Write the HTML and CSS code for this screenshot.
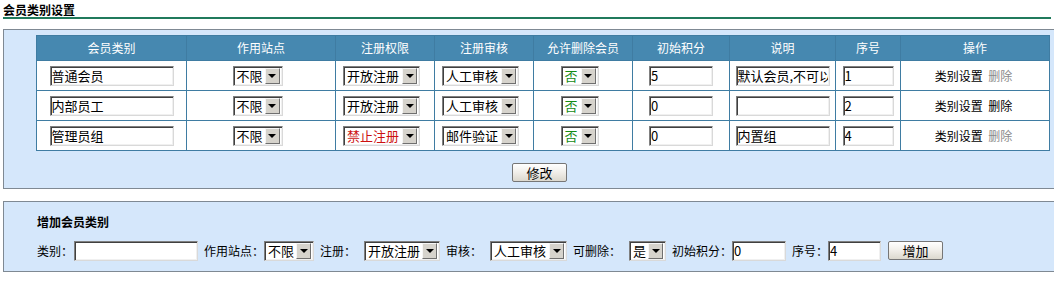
FILE: index.html
```html
<!DOCTYPE html>
<html lang="zh-CN">
<head>
<meta charset="utf-8">
<title>会员类别设置</title>
<link rel="stylesheet" href="styles.css">
</head>
<body>
<div class="page">
  <div class="title">会员类别设置</div>

  <div class="panel panel-list">
    <table class="grid">
      <colgroup>
        <col class="c150"><col class="c149"><col class="c99"><col class="c99"><col class="c99"><col class="c97"><col class="c106"><col class="c65"><col class="c149">
      </colgroup>
      <thead>
        <tr>
          <th>会员类别</th><th>作用站点</th><th>注册权限</th><th>注册审核</th><th>允许删除会员</th><th>初始积分</th><th>说明</th><th>序号</th><th>操作</th>
        </tr>
      </thead>
      <tbody>
        <tr>
          <td><input class="txt w-name" value="普通会员"></td>
          <td><span class="sel w-site"><span class="val">不限</span><span class="arr"></span></span></td>
          <td><span class="sel w-reg"><span class="val">开放注册</span><span class="arr"></span></span></td>
          <td><span class="sel w-aud"><span class="val">人工审核</span><span class="arr"></span></span></td>
          <td><span class="sel w-del"><span class="val green">否</span><span class="arr"></span></span></td>
          <td><input class="txt w-score" value="5"></td>
          <td><input class="txt w-desc" value="默认会员,不可以删除"></td>
          <td><input class="txt w-order" value="1"></td>
          <td class="ops"><span>类别设置</span> <span class="off">删除</span></td>
        </tr>
        <tr>
          <td><input class="txt w-name" value="内部员工"></td>
          <td><span class="sel w-site"><span class="val">不限</span><span class="arr"></span></span></td>
          <td><span class="sel w-reg"><span class="val">开放注册</span><span class="arr"></span></span></td>
          <td><span class="sel w-aud"><span class="val">人工审核</span><span class="arr"></span></span></td>
          <td><span class="sel w-del"><span class="val green">否</span><span class="arr"></span></span></td>
          <td><input class="txt w-score" value="0"></td>
          <td><input class="txt w-desc" value=""></td>
          <td><input class="txt w-order" value="2"></td>
          <td class="ops"><span>类别设置</span> <span>删除</span></td>
        </tr>
        <tr>
          <td><input class="txt w-name" value="管理员组"></td>
          <td><span class="sel w-site"><span class="val">不限</span><span class="arr"></span></span></td>
          <td><span class="sel w-reg"><span class="val red">禁止注册</span><span class="arr"></span></span></td>
          <td><span class="sel w-aud"><span class="val">邮件验证</span><span class="arr"></span></span></td>
          <td><span class="sel w-del"><span class="val green">否</span><span class="arr"></span></span></td>
          <td><input class="txt w-score" value="0"></td>
          <td><input class="txt w-desc" value="内置组"></td>
          <td><input class="txt w-order" value="4"></td>
          <td class="ops"><span>类别设置</span> <span class="off">删除</span></td>
        </tr>
      </tbody>
    </table>
    <div class="actions"><button class="btn">修改</button></div>
  </div>

  <div class="panel panel-add">
    <div class="sub">增加会员类别</div>
    <div class="form-row">
      <span class="lbl first">类别：</span>
      <input class="txt a-name" value="">
      <span class="lbl">作用站点：</span>
      <span class="sel a-site"><span class="val">不限</span><span class="arr"></span></span>
      <span class="lbl">注册：</span>
      <span class="sel a-reg gap"><span class="val">开放注册</span><span class="arr"></span></span>
      <span class="lbl">审核：</span>
      <span class="sel a-aud gap"><span class="val">人工审核</span><span class="arr"></span></span>
      <span class="lbl">可删除：</span>
      <span class="sel a-del gap"><span class="val">是</span><span class="arr"></span></span>
      <span class="lbl">初始积分：</span>
      <input class="txt a-score" value="0">
      <span class="lbl">序号：</span>
      <input class="txt a-order" value="4">
      <button class="btn add">增加</button>
    </div>
  </div>
</div>
</body>
</html>
```

FILE: styles.css
```css
html, body {
  margin: 0;
  padding: 0;
  background: #ffffff;
  overflow: hidden;
}

body {
  font-family: "Noto Sans CJK SC", "Liberation Sans", sans-serif;
  font-size: 12px;
  line-height: 14px;
  color: #000000;
}

.page {
  padding: 3px 3px 0 3px;
}

.title {
  font-weight: bold;
  height: 14px;
  line-height: 14px;
  border-bottom: 2px solid #207a5c;
}

.panel {
  background: #d5e7fb;
  border: 1px solid #7f8993;
  margin-right: -40px;
}

.panel-list {
  margin-top: 10px;
  padding: 5px 0 6px 32px;
}

.grid {
  border-collapse: collapse;
  table-layout: fixed;
  width: 1014px;
  background: #ffffff;
}

.grid th,
.grid td {
  border: 1px solid #3f7ca2;
  padding: 0;
  text-align: center;
  vertical-align: middle;
}

.grid th {
  height: 24px;
  background: #4688b0;
  color: #ffffff;
  font-weight: normal;
}

.grid td {
  height: 29px;
}

.c150 { width: 150px; }
.c149 { width: 149px; }
.c99 { width: 99px; }
.c97 { width: 97px; }
.c106 { width: 106px; }
.c65 { width: 65px; }

.txt {
  box-sizing: border-box;
  height: 20px;
  margin: 0;
  padding: 0 1px;
  border: 1px solid;
  border-color: #808080 #d9d9d9 #d9d9d9 #808080;
  box-shadow: inset 1px 1px 0 #404040, inset -1px -1px 0 #f0f0f0;
  background: #ffffff;
  font-family: "Noto Sans CJK SC", "Liberation Sans", sans-serif;
  font-size: 13px;
  line-height: 16px;
  color: #000000;
  vertical-align: middle;
  outline: none;
}

.sel {
  box-sizing: border-box;
  display: inline-flex;
  align-items: center;
  height: 20px;
  padding: 1px 2px 1px 3px;
  border: 1px solid;
  border-color: #808080 #d9d9d9 #d9d9d9 #808080;
  box-shadow: inset 1px 1px 0 #404040, inset -1px -1px 0 #f0f0f0;
  background: #ffffff;
  font-size: 13px;
  line-height: 16px;
  vertical-align: middle;
  text-align: left;
}

.grid .sel {
  margin-right: 7px;
}

.sel .val {
  flex: 1;
  white-space: nowrap;
}

.sel .arr {
  box-sizing: border-box;
  flex: none;
  width: 15px;
  height: 16px;
  display: flex;
  align-items: center;
  justify-content: center;
  background: #d6d3cc;
  border: 1px solid;
  border-color: #f6f6f6 #6f6f6f #6f6f6f #f6f6f6;
}

.sel .arr::after {
  content: "";
  width: 0;
  height: 0;
  border-left: 4px solid transparent;
  border-right: 4px solid transparent;
  border-top: 4px solid #000000;
  margin-top: 1px;
}

.green { color: #138a13; }
.red { color: #cc1111; }

.w-name { width: 124px; }
.w-site { width: 50px; }
.w-reg { width: 77px; }
.w-aud { width: 77px; }
.w-del { width: 38px; }
.w-score { width: 64px; }
.w-desc { width: 94px; }
.w-order { width: 51px; }

.ops {
  font-size: 12px;
  white-space: nowrap;
}

.ops span {
  margin-right: 3px;
}

.ops .off {
  color: #8a8a8a;
}

.actions {
  width: 1007px;
  margin-top: 12px;
  height: 19px;
  display: flex;
  justify-content: center;
}

.btn {
  box-sizing: border-box;
  width: 55px;
  height: 19px;
  margin: 0;
  padding: 0;
  border: 1px solid #767676;
  border-radius: 2px;
  background: linear-gradient(#ffffff, #f2f0eb 45%, #dcd8ce);
  font-family: "Noto Sans CJK SC", "Liberation Sans", sans-serif;
  font-size: 13px;
  line-height: 15px;
  color: #000000;
}

.panel-add {
  margin-top: 12px;
  padding: 13px 0 10px 33px;
}

.sub {
  font-weight: bold;
  height: 14px;
  line-height: 14px;
}

.form-row {
  margin-top: 11px;
  height: 21px;
  display: flex;
  align-items: center;
}

.lbl {
  margin-left: 6px;
  white-space: nowrap;
}

.lbl.first {
  margin-left: 0;
}

.gap {
  margin-left: 8px;
}

.a-name { width: 124px; margin-left: 1px; }
.a-site { width: 50px; }
.a-reg { width: 76px; }
.a-aud { width: 77px; }
.a-del { width: 37px; }
.a-score { width: 54px; }
.a-order { width: 53px; }

.btn.add {
  margin-left: 7px;
}
```
